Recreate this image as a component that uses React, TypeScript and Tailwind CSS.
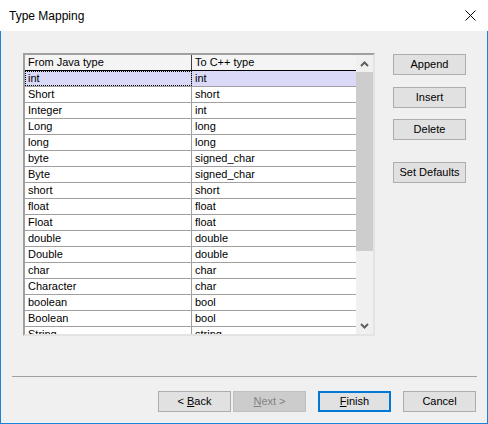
import React from 'react'

const rows: [string, string][] = [
  ['int', 'int'],
  ['Short', 'short'],
  ['Integer', 'int'],
  ['Long', 'long'],
  ['long', 'long'],
  ['byte', 'signed_char'],
  ['Byte', 'signed_char'],
  ['short', 'short'],
  ['float', 'float'],
  ['Float', 'float'],
  ['double', 'double'],
  ['Double', 'double'],
  ['char', 'char'],
  ['Character', 'char'],
  ['boolean', 'bool'],
  ['Boolean', 'bool'],
  ['String', 'string'],
]

const font = { fontFamily: '"Liberation Sans", Arial, sans-serif' }

function WinButton({ children, className = '' }: { children: React.ReactNode; className?: string }) {
  return (
    <div
      className={`flex h-[21px] w-[73px] items-center justify-center border border-[#adadad] bg-[#e1e1e1] text-[11px] text-black ${className}`}
    >
      {children}
    </div>
  )
}

export default function App() {
  return (
    <div className="flex h-[424px] w-[488px] flex-col text-[11px] text-black" style={font}>
      {/* title bar */}
      <div className="flex h-[31px] items-center justify-between bg-white pl-[9px] pr-[11px]">
        <span className="text-[12px]">Type Mapping</span>
        <svg width="11" height="11" viewBox="0 0 11 11" className="mr-[1px]">
          <path d="M0.5 0.5 L10.5 10.5 M10.5 0.5 L0.5 10.5" stroke="#000" strokeWidth="1" />
        </svg>
      </div>

      <div className="flex flex-1 flex-col border-x border-b border-[#1883d7] bg-[#f0f0f0]">
        <div className="flex pl-[22px] pt-[22px]">
          {/* list view */}
          <div className="flex h-[283px] w-[352px] border-2 border-b-[#e3e3e3] border-l-[#a0a0a0] border-r-[#e3e3e3] border-t-[#a0a0a0] bg-white">
            <div className="flex flex-1 flex-col overflow-hidden">
              <div className="flex h-[16px] shrink-0 border-b border-black bg-[#f4f4f4]">
                <div className="flex w-[167px] items-center border-r border-[#404040] pl-[3px]">From Java type</div>
                <div className="flex flex-1 items-center pl-[3px]">To C++ type</div>
              </div>
              {rows.map(([from, to], i) => (
                <div
                  key={from}
                  className={`flex h-[16px] shrink-0 border-b border-[#a0a0a0] ${i === 0 ? 'bg-[#dadaf8]' : ''}`}
                >
                  <div
                    className={`flex w-[167px] items-center border-r border-[#a0a0a0] pl-[3px] ${
                      i === 0 ? 'outline outline-1 -outline-offset-1 outline-dotted outline-black' : ''
                    }`}
                  >
                    {from}
                  </div>
                  <div className="flex flex-1 items-center pl-[3px]">{to}</div>
                </div>
              ))}
            </div>

            {/* scrollbar */}
            <div className="flex w-[17px] flex-col bg-[#f0f0f0]">
              <div className="flex h-[17px] items-center justify-center">
                <svg width="9" height="6" viewBox="0 0 9 6">
                  <path d="M1 5 L4.5 1.5 L8 5" fill="none" stroke="#606060" strokeWidth="2" />
                </svg>
              </div>
              <div className="h-[179px] bg-[#cdcdcd]" />
              <div className="flex-1" />
              <div className="flex h-[17px] items-center justify-center">
                <svg width="9" height="6" viewBox="0 0 9 6">
                  <path d="M1 1 L4.5 4.5 L8 1" fill="none" stroke="#606060" strokeWidth="2" />
                </svg>
              </div>
            </div>
          </div>

          {/* side buttons */}
          <div className="ml-[18px] mt-[1px] flex flex-col">
            <WinButton>Append</WinButton>
            <WinButton className="mt-[12px]">Insert</WinButton>
            <WinButton className="mt-[11px]">Delete</WinButton>
            <WinButton className="mt-[22px]">Set Defaults</WinButton>
          </div>
        </div>

        <div className="ml-[11px] mt-[40px] h-px w-[465px] bg-[#a0a0a0]" />

        <div className="mt-[14px] flex pl-[157px]">
          <WinButton>
            &lt;&nbsp;<span className="underline underline-offset-1">B</span>ack
          </WinButton>
          <div className="ml-[2px] flex h-[21px] w-[73px] items-center justify-center border border-[#bfbfbf] bg-[#cccccc] text-[#838383]">
            <span className="underline underline-offset-1">N</span>ext &gt;
          </div>
          <div className="ml-[12px] flex h-[21px] w-[73px] items-center justify-center border-2 border-[#0078d7] bg-[#e1e1e1]">
            <span className="underline underline-offset-1">F</span>inish
          </div>
          <WinButton className="ml-[12px]">Cancel</WinButton>
        </div>
      </div>
    </div>
  )
}
